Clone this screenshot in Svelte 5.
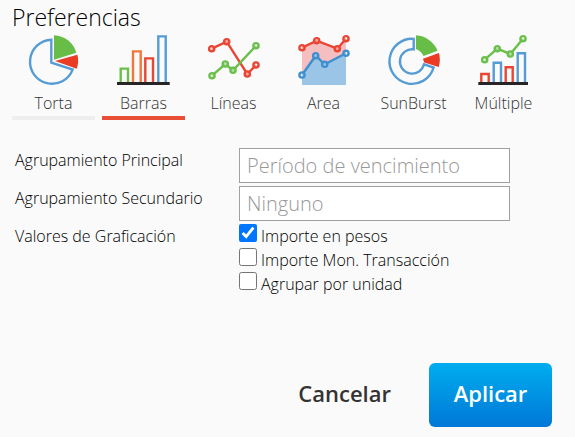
<script>
  const tabs = [
    { id: 'pie', label: 'Torta' },
    { id: 'bars', label: 'Barras' },
    { id: 'lines', label: 'Líneas' },
    { id: 'area', label: 'Area' },
    { id: 'sunburst', label: 'SunBurst' },
    { id: 'multiple', label: 'Múltiple' }
  ];
  let active = $state('bars');
  let primary = $state('');
  let secondary = $state('');
  let values = $state([
    { label: 'Importe en pesos', checked: true },
    { label: 'Importe Mon. Transacción', checked: false },
    { label: 'Agrupar por unidad', checked: false }
  ]);

  const lineSeries = [
    { color: 'red', points: [[7.7, 14.7], [22.7, 7.7], [43.3, 40], [52, 31]] },
    { color: 'green', points: [[8, 41.7], [21.3, 30], [29, 36.3], [52, 11.7]] }
  ];
  const areaSeries = [
    { color: 'red', points: [[8, 13.7], [22.7, 6.7], [43.3, 14.7], [52, 4.7]] },
    { color: 'blue', points: [[8, 41], [21.7, 21.7], [30.7, 30.3], [52, 19.3]] }
  ];
  const multiSeries = [
    { color: 'green', points: [[10.7, 25.7], [23.3, 14.7], [36.3, 20], [49, 4.7]] }
  ];
</script>

{#snippet series(list)}
  {#each list as s}
    <g class={s.color}>
      <polyline points={s.points.join(' ')} />
      {#each s.points as [x, y]}
        <circle class="dot" cx={x} cy={y} r="2.6" />
      {/each}
    </g>
  {/each}
{/snippet}

<main>
  <h1>Preferencias</h1>

  <nav>
    {#each tabs as tab}
      <button
        type="button"
        class="tab"
        class:first={tab.id === 'pie'}
        class:active={active === tab.id}
        aria-pressed={active === tab.id}
        onclick={() => (active = tab.id)}
      >
        <svg viewBox="0 0 59 54" width="59" height="54" aria-hidden="true">
          {#if tab.id === 'pie'}
            <path class="blue" d="M27.3 5.8A22 22 0 1 0 48.6 35.6L27.3 28.6Z" />
            <path class="fill-green" d="M30 1.3A24 24 0 0 1 52.3 18.7L30 25.7Z" />
            <path class="fill-red" d="M31 27L53.4 20.7A24 24 0 0 1 52.7 34.7Z" />
          {:else if tab.id === 'bars'}
            <path class="green" d="M6.7 49V34.6H14V49" />
            <path class="orange" d="M19 49V17.4H26.7V49" />
            <path class="red" d="M31.3 49V24.4H39V49" />
            <path class="blue" d="M44.3 49V2.4H51.7V49" />
            <path class="base" d="M3 49.5H55.7" />
          {:else if tab.id === 'lines'}
            {@render series(lineSeries)}
          {:else if tab.id === 'area'}
            <path class="wash-red" d="M8 13.7L22.7 6.7L43.3 14.7L52 4.7V51H8Z" />
            <path class="wash-blue" d="M8 41L21.7 21.7L30.7 30.3L52 19.3V51H8Z" />
            {@render series(areaSeries)}
          {:else if tab.id === 'sunburst'}
            <path
              class="blue"
              d="M29.7 4.9A22.5 22.5 0 1 0 49.6 33.5L40 30.3A12.2 12.2 0 1 1 29.7 15.3Z"
            />
            <path class="fill-green" d="M32 1.3A25 25 0 0 1 53.6 16.7L39.5 22A13 13 0 0 0 32 14.9Z" />
            <path class="fill-red" d="M39 24.7L55 19A25 25 0 0 1 54.7 32.9L40.2 28.5Z" />
          {:else}
            <path class="red" d="M7.3 49V40H14.7V49M31.7 49V33.3H38.7V49" />
            <path class="blue" d="M19.7 49V28.7H27V49M43.7 49V19.3H51V49" />
            <path class="base" d="M4.3 49.5H54" />
            {@render series(multiSeries)}
          {/if}
        </svg>
        <span>{tab.label}</span>
      </button>
    {/each}
  </nav>

  <form onsubmit={(e) => e.preventDefault()}>
    <div class="row">
      <label for="primary">Agrupamiento Principal</label>
      <input id="primary" type="text" placeholder="Período de vencimiento" bind:value={primary} />
    </div>
    <div class="row">
      <label for="secondary">Agrupamiento Secundario</label>
      <input id="secondary" type="text" placeholder="Ninguno" bind:value={secondary} />
    </div>
    <div class="row" role="group" aria-labelledby="values-title">
      <span class="title" id="values-title">Valores de Graficación</span>
      <div class="checks">
        {#each values as v}
          <label class="check">
            <input type="checkbox" bind:checked={v.checked} />
            <span>{v.label}</span>
          </label>
        {/each}
      </div>
    </div>

    <footer>
      <button type="button" class="cancel">Cancelar</button>
      <button type="submit" class="apply">Aplicar</button>
    </footer>
  </form>
</main>

<style>
  :global(body) {
    background: #fafafa;
  }

  main {
    padding: 2px 12px 10px;
    font-family: 'Open Sans', 'Noto Sans', sans-serif;
    font-size: 16px;
    font-weight: 300;
    color: #000;
  }

  h1 {
    margin: 0;
    font-size: 23px;
    line-height: 30px;
    font-weight: 300;
  }

  nav {
    display: flex;
    gap: 7px;
  }

  .tab {
    display: flex;
    flex-direction: column;
    align-items: center;
    width: 83px;
    margin: 0;
    padding: 2px 0 0;
    border: 0;
    border-bottom: 4px solid transparent;
    background: none;
    font: inherit;
    line-height: 22px;
    color: #333;
    cursor: pointer;
  }

  .tab span {
    padding: 4px 0 2px;
  }

  .tab.first {
    border-color: #eee;
  }

  .tab.active {
    border-color: #e94f37;
  }

  svg {
    display: block;
    fill: none;
    stroke-width: 2.4;
  }

  .blue { stroke: #559cd5; }
  .green { stroke: #6abf4b; }
  .red { stroke: #ea4433; }
  .orange { stroke: #f0763f; }
  .wash-blue ~ g.blue { stroke: #3f8fd0; }
  .base { stroke: #272425; stroke-width: 3; }
  .fill-green { fill: #67bd45; }
  .fill-red { fill: #ea3b24; }
  .wash-red { fill: #f5bfc2; }
  .wash-blue { fill: #9bc5e7; }
  .dot { fill: #fafafa; fill-opacity: 0.5; }

  form {
    padding: 28px 0 0 3px;
  }

  .row {
    display: flex;
    gap: 4px;
    margin-bottom: 3px;
  }

  .row > label,
  .title {
    flex: 0 0 220px;
    line-height: 24px;
  }

  input[type='text'] {
    box-sizing: border-box;
    width: 271px;
    height: 35px;
    margin: 0;
    padding: 0 7px;
    border: 1px solid #a0a0a0;
    background: #fff;
    font: inherit;
    font-size: 20px;
    color: #333;
  }

  input::placeholder {
    color: #999;
    opacity: 1;
  }

  .check {
    display: flex;
    gap: 4px;
    height: 24px;
  }

  .check span {
    line-height: 24px;
  }

  .check input {
    width: 18px;
    height: 18px;
    margin: 0;
  }

  footer {
    display: flex;
    justify-content: flex-end;
    gap: 4px;
    padding: 64px 11px 0 0;
  }

  footer button {
    margin: 0;
    height: 64px;
    padding: 0 24px 4px;
    border: 0;
    border-radius: 6px;
    font: inherit;
    font-size: 22px;
    font-weight: 600;
    cursor: pointer;
  }

  footer .cancel {
    padding: 0 34px 4px;
    background: none;
    color: #333;
  }

  .apply {
    min-width: 123px;
    background: linear-gradient(#00adee, #0078d7);
    color: #fff;
  }
</style>
